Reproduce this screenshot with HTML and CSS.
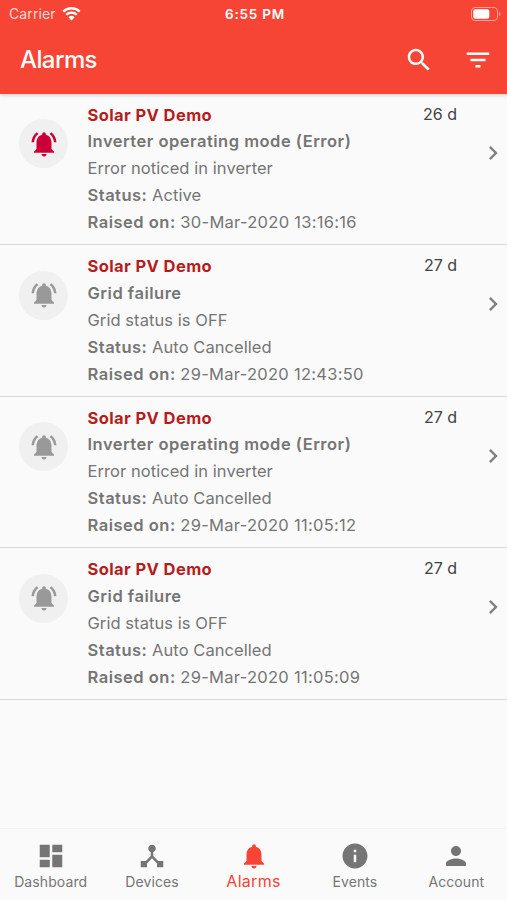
FILE: index.html
```html
<!DOCTYPE html>
<html lang="en">
<head>
    <meta charset="UTF-8">
    <meta name="viewport" content="width=device-width, initial-scale=1.0">
    <title>Alarms</title>
    <link rel="stylesheet" href="styles.css">
</head>
<body>
    <svg class="symbols" width="0" height="0">
        <symbol id="bellActive" viewBox="0 0 24 24">
            <path d="M7.58 4.08L6.15 2.65C3.75 4.48 2.17 7.3 2.03 10.5h2c.15-2.65 1.51-4.97 3.55-6.42zm12.39 6.42h2c-.15-3.2-1.73-6.02-4.12-7.85l-1.42 1.43c2.02 1.45 3.39 3.77 3.54 6.42zM18 11c0-3.07-1.64-5.64-4.5-6.32V4c0-.83-.67-1.5-1.5-1.5s-1.5.67-1.5 1.5v.68C7.63 5.36 6 7.92 6 11v5l-2 2v1h16v-1l-2-2v-5zm-6 11c.14 0 .27-.01.4-.04.65-.14 1.18-.58 1.44-1.18.1-.24.15-.5.15-.78h-4c.01 1.1.9 2 2.01 2z"/>
        </symbol>
        <symbol id="chevron" viewBox="0 0 24 24">
            <path d="M10 6L8.59 7.41 13.17 12l-4.58 4.59L10 18l6-6z"/>
        </symbol>
    </svg>

    <header class="header">
        <div class="status-bar">
            <div class="carrier">
                <span>Carrier</span>
                <svg class="wifi" viewBox="0 0 18 14">
                    <path d="M1.2 5.2a11.2 11.2 0 0 1 15.6 0M4 8.2a7.2 7.2 0 0 1 10 0"/>
                    <path class="dot" d="M9 13.6l-2.9-3a4.2 4.2 0 0 1 5.8 0z"/>
                </svg>
            </div>
            <div class="time">6:55 PM</div>
            <svg class="battery" viewBox="0 0 30 14">
                <rect class="case" x=".5" y=".5" width="26" height="13" rx="3.5"/>
                <rect x="2.3" y="2.3" width="16" height="9.4" rx="2"/>
                <path class="cap" d="M28 4.8c2 .8 2 3.6 0 4.4z"/>
            </svg>
        </div>
        <div class="toolbar">
            <h1>Alarms</h1>
            <svg class="icon" viewBox="0 0 24 24"><path d="M15.5 14h-.79l-.28-.27C15.41 12.59 16 11.11 16 9.5 16 5.91 13.09 3 9.5 3S3 5.91 3 9.5 5.91 16 9.5 16c1.61 0 3.09-.59 4.23-1.57l.27.28v.79l5 4.99L20.49 19l-4.99-5zm-6 0C7.01 14 5 11.99 5 9.5S7.01 5 9.5 5 14 7.01 14 9.5 11.99 14 9.5 14z"/></svg>
            <svg class="icon" viewBox="0 0 24 24"><path d="M10 18h4v-2h-4v2zM3 6v2h18V6H3zm3 7h12v-2H6v2z"/></svg>
        </div>
    </header>

    <main class="alarm-list">
        <article class="alarm active">
            <div class="avatar"><svg class="icon"><use href="#bellActive"/></svg></div>
            <div class="details">
                <h2>Solar PV Demo</h2>
                <p><b>Inverter operating mode (Error)</b></p>
                <p>Error noticed in inverter</p>
                <p><b>Status:</b> Active</p>
                <p><b>Raised on:</b> <time>30-Mar-2020 13:16:16</time></p>
            </div>
            <div class="age">26 d</div>
            <svg class="chevron"><use href="#chevron"/></svg>
        </article>
        <article class="alarm">
            <div class="avatar"><svg class="icon"><use href="#bellActive"/></svg></div>
            <div class="details">
                <h2>Solar PV Demo</h2>
                <p><b>Grid failure</b></p>
                <p>Grid status is OFF</p>
                <p><b>Status:</b> Auto Cancelled</p>
                <p><b>Raised on:</b> <time>29-Mar-2020 12:43:50</time></p>
            </div>
            <div class="age">27 d</div>
            <svg class="chevron"><use href="#chevron"/></svg>
        </article>
        <article class="alarm">
            <div class="avatar"><svg class="icon"><use href="#bellActive"/></svg></div>
            <div class="details">
                <h2>Solar PV Demo</h2>
                <p><b>Inverter operating mode (Error)</b></p>
                <p>Error noticed in inverter</p>
                <p><b>Status:</b> Auto Cancelled</p>
                <p><b>Raised on:</b> <time>29-Mar-2020 11:05:12</time></p>
            </div>
            <div class="age">27 d</div>
            <svg class="chevron"><use href="#chevron"/></svg>
        </article>
        <article class="alarm">
            <div class="avatar"><svg class="icon"><use href="#bellActive"/></svg></div>
            <div class="details">
                <h2>Solar PV Demo</h2>
                <p><b>Grid failure</b></p>
                <p>Grid status is OFF</p>
                <p><b>Status:</b> Auto Cancelled</p>
                <p><b>Raised on:</b> <time>29-Mar-2020 11:05:09</time></p>
            </div>
            <div class="age">27 d</div>
            <svg class="chevron"><use href="#chevron"/></svg>
        </article>
    </main>

    <nav class="tabs">
        <a class="tab">
            <svg class="icon" viewBox="0 0 24 24"><path d="M3 13h8V3H3v10zm0 8h8v-6H3v6zm10 0h8V11h-8v10zm0-18v6h8V3h-8z"/></svg>
            <span>Dashboard</span>
        </a>
        <a class="tab">
            <svg class="icon" viewBox="0 0 24 24"><path d="M17 16l-4-4V8.82C14.16 8.4 15 7.3 15 6c0-1.66-1.34-3-3-3S9 4.34 9 6c0 1.3.84 2.4 2 2.82V12l-4 4H3v5h5v-3.05l4-4.2 4 4.2V21h5v-5h-4z"/></svg>
            <span>Devices</span>
        </a>
        <a class="tab current">
            <svg class="icon" viewBox="0 0 24 24"><path d="M12 22c1.1 0 2-.9 2-2h-4c0 1.1.89 2 2 2zm6-6v-5c0-3.07-1.64-5.64-4.5-6.32V4c0-.83-.67-1.5-1.5-1.5s-1.5.67-1.5 1.5v.68C7.63 5.36 6 7.92 6 11v5l-2 2v1h16v-1l-2-2z"/></svg>
            <span>Alarms</span>
        </a>
        <a class="tab">
            <svg class="icon" viewBox="0 0 24 24"><path d="M12 2C6.48 2 2 6.48 2 12s4.48 10 10 10 10-4.48 10-10S17.52 2 12 2zm1 15h-2v-6h2v6zm0-8h-2V7h2v2z"/></svg>
            <span>Events</span>
        </a>
        <a class="tab">
            <svg class="icon" viewBox="0 0 24 24"><path d="M12 12c2.21 0 4-1.79 4-4s-1.79-4-4-4-4 1.79-4 4 1.79 4 4 4zm0 2c-2.67 0-8 1.34-8 4v2h16v-2c0-2.66-5.33-4-8-4z"/></svg>
            <span>Account</span>
        </a>
    </nav>
</body>
</html>
```
FILE: styles.css
```css
* {
    box-sizing: border-box;
}

body {
    font-family: Inter, "Liberation Sans", sans-serif;
    margin: 0;
    height: 900px;
    display: flex;
    flex-direction: column;
    background-color: #fafafa;
    color: #757575;
    overflow: hidden;
}

h1, h2, p {
    margin: 0;
}

svg {
    display: block;
    fill: currentColor;
    flex: none;
}

.symbols {
    display: none;
}

.icon {
    width: 30px;
    height: 30px;
}

.header {
    height: 93.5px;
    background-color: #f64435;
    color: #fff;
    box-shadow: 0 1px 4px rgba(0, 0, 0, 0.2);
}

.status-bar {
    display: grid;
    grid-template-columns: 1fr auto 1fr;
    align-items: center;
    height: 26px;
    padding: 1px 6px 0 9px;
    font-size: 14px;
}

.carrier {
    display: flex;
    align-items: center;
    gap: 6px;
    letter-spacing: 0.1px;
    color: #ffd9d5;
}

.wifi {
    width: 19px;
    height: 15px;
    fill: none;
    stroke: #fff;
    stroke-width: 2.2;
}

.wifi .dot {
    fill: #fff;
    stroke: none;
}

.time {
    font-size: 13.5px;
    font-weight: 600;
    letter-spacing: 0.8px;
}

.battery {
    width: 30px;
    height: 14px;
    justify-self: end;
}

.battery .case {
    fill: none;
    stroke: #fba19a;
}

.battery .cap {
    fill: #fba19a;
}

.toolbar {
    display: flex;
    align-items: center;
    gap: 29px;
    height: 67px;
    padding: 0 14px 0 20px;
}

.toolbar h1 {
    flex: 1;
    font-size: 24px;
    font-weight: 500;
    letter-spacing: -0.6px;
}

.alarm-list {
    flex: 1;
}

.alarm {
    display: flex;
    height: 151.5px;
    padding: 8px 0 0 19px;
    border-bottom: 1.5px solid #d6d6d6;
    font-size: 16.5px;
    line-height: 26.9px;
}

.avatar {
    display: flex;
    align-items: center;
    justify-content: center;
    width: 49px;
    height: 49px;
    margin: 17.5px 19.5px 0 0;
    border-radius: 50%;
    background-color: #f0f0f0;
    color: #999;
}

.active .avatar {
    color: #cb0038;
}

.details {
    flex: 1;
    white-space: nowrap;
    letter-spacing: 0.06px;
}

.details h2 {
    font-size: 16.5px;
    font-weight: 700;
    line-height: inherit;
    letter-spacing: 0.4px;
    color: #b71c1c;
}

.details b {
    font-weight: 600;
    letter-spacing: 0.5px;
}

.details time {
    letter-spacing: 0.28px;
}

.age {
    font-size: 16px;
    line-height: 24.5px;
    color: #424242;
}

.chevron {
    width: 28px;
    height: 28px;
    margin: 37px 0 0 22px;
    color: #808080;
}

.tabs {
    display: flex;
    height: 72px;
    border-top: 1px solid #f3f3f3;
}

.tab {
    flex: 1;
    display: flex;
    flex-direction: column;
    align-items: center;
    padding-top: 12px;
    font-size: 14px;
    line-height: 22px;
    letter-spacing: 0.1px;
}

.tab.current {
    color: #f64435;
    font-size: 16px;
    line-height: 20px;
    letter-spacing: 0.3px;
}
```
